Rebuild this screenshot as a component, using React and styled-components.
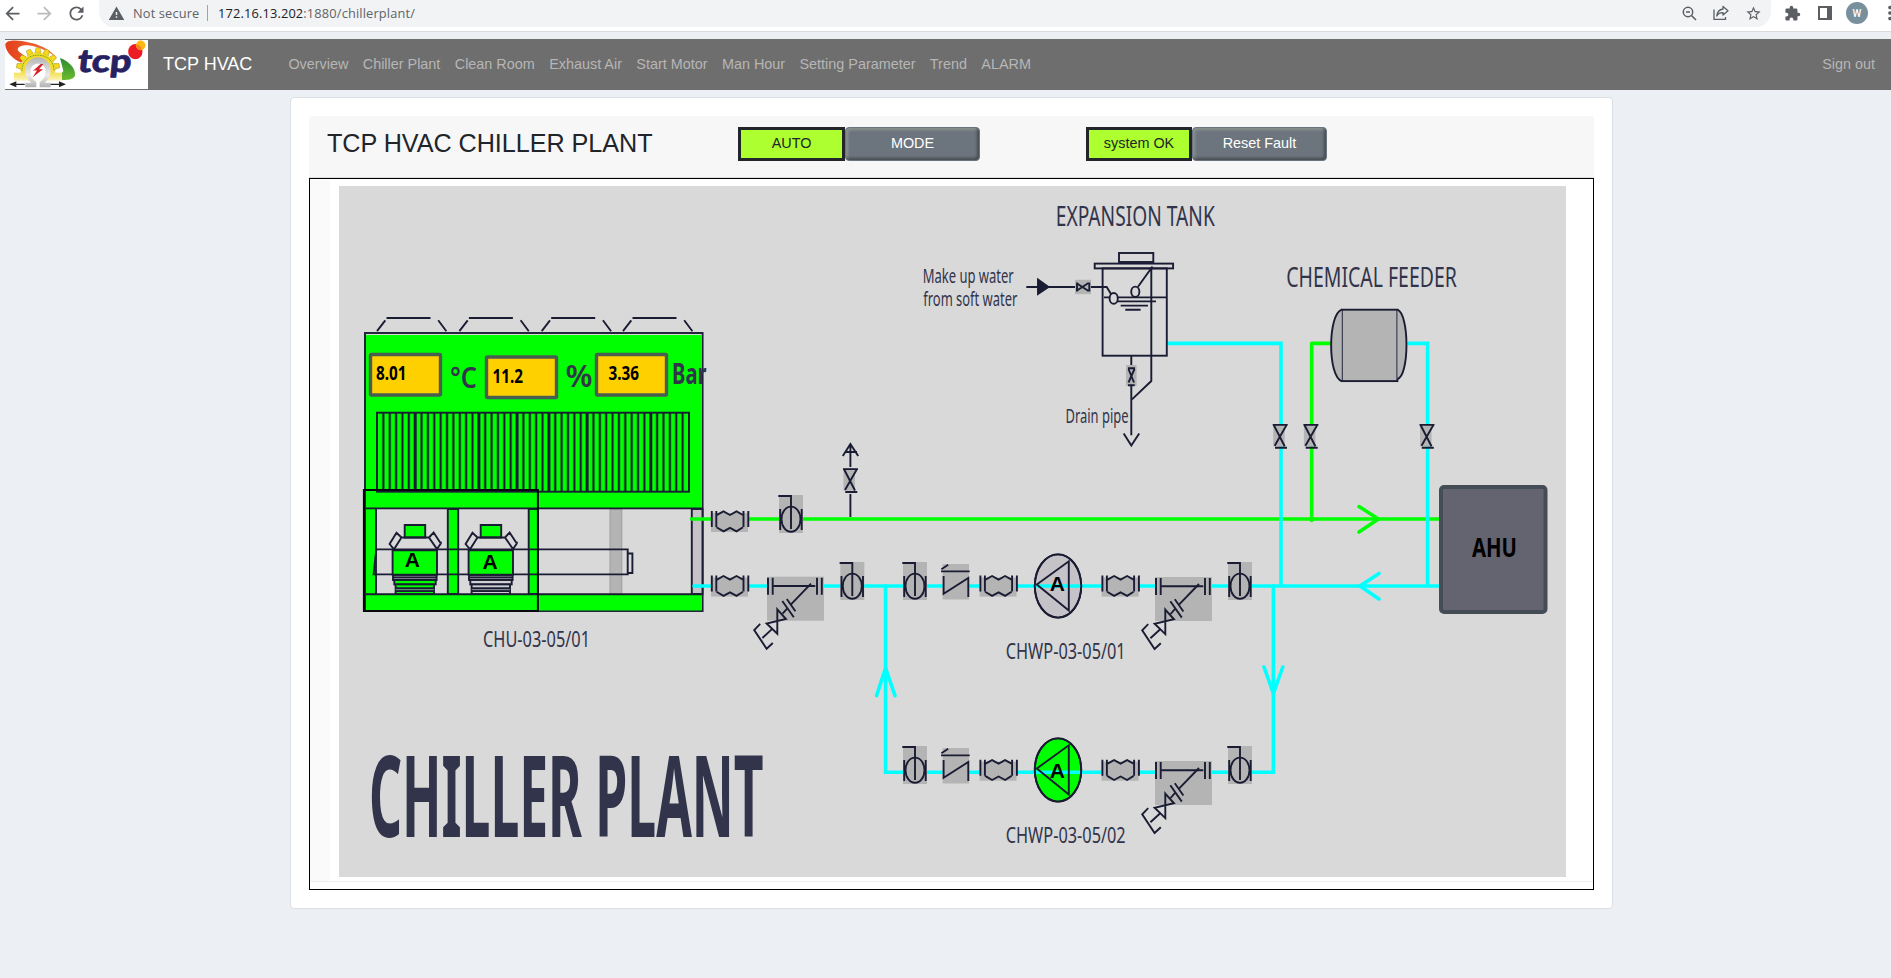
import React from 'react';
import styled, { createGlobalStyle } from 'styled-components';
import {
  MdArrowBack,
  MdArrowForward,
  MdRefresh,
  MdWarning,
  MdStarBorder,
  MdExtension,
  MdMoreVert,
} from 'react-icons/md';

const INK = '#1a1c33';
const LABEL = '#31344b';
const GREEN = '#00ff00';
const CYAN = '#00ffff';
const GRAY = '#b4b4b4';
const LILAC = '#c5c2c8';

const GlobalStyle = createGlobalStyle`
  * { box-sizing: border-box; }
  html, body { margin: 0; padding: 0; overflow: hidden; }
  body {
    background: #ecf0f4;
    font-family: "Liberation Sans", Arial, sans-serif;
    font-size: 14.4px;
    color: #212529;
  }
  svg { display: block; }
`;

const Page = styled.div`
  height: 978px;
  overflow: hidden;
  display: flex;
  flex-direction: column;
`;

/* ---- Browser toolbar ---- */

const BrowserBar = styled.div`
  height: 32px;
  flex: none;
  display: flex;
  align-items: flex-start;
  overflow: hidden;
  background: #fff;
  border-bottom: 1px solid #d8dadd;
`;

const BrowserNav = styled.div`
  width: 99px;
  height: 26px;
  flex: none;
  display: flex;
  align-items: center;
  gap: 11px;
  padding-left: 2px;
`;

const BrowserIcon = styled.span`
  display: flex;
  flex: none;
  font-size: ${(p) => p.$size || 21}px;
  color: ${(p) => (p.$dim ? '#b9bbbe' : '#5b5e63')};
`;

const AddressBar = styled.div`
  flex: 1;
  height: 27px;
  display: flex;
  align-items: center;
  padding: 0 9px 1px 9px;
  background: #f1f3f4;
  border-radius: 0 0 14px 14px / 0 0 16px 16px;
  font-family: "Open Sans", "Noto Sans", sans-serif;
  font-size: 12.8px;
  line-height: 16px;
`;

const Security = styled.span`
  width: 67px;
  margin-left: 8px;
  white-space: nowrap;
  letter-spacing: 0.15px;
  color: #5f6368;
`;

const Separator = styled.span`
  width: 1px;
  height: 16px;
  margin: 0 10px 0 7px;
  background: #9fa2a6;
`;

const Url = styled.span`
  flex: 1;
  white-space: nowrap;
  letter-spacing: 0.16px;
  color: #5f6368;
  b { font-weight: 400; color: #202124; }
`;

const AddressActions = styled.div`
  display: flex;
  align-items: center;
  gap: 16px;
`;

const BrowserTools = styled.div`
  width: 120px;
  height: 26px;
  flex: none;
  display: flex;
  align-items: center;
  padding-left: 13px;
`;

const PanelIcon = styled.svg`
  flex: none;
  margin-left: 17px;
`;

const Avatar = styled.span`
  width: 22px;
  height: 22px;
  margin: 0 11px 0 14px;
  flex: none;
  display: flex;
  align-items: center;
  justify-content: center;
  border-radius: 50%;
  background: #78909c;
  color: #fff;
  font: 500 10px Roboto, sans-serif;
`;

/* ---- Site navigation ---- */

const Navbar = styled.nav`
  height: 51px;
  flex: none;
  margin: 7px 0 0 5px;
  display: flex;
  align-items: center;
  background: #6e6e6e;
  color: #b6b6b6;
`;

const LogoBox = styled.div`
  width: 143px;
  height: 49px;
  flex: none;
  background: #fff;
`;

const Brand = styled.span`
  width: 140.4px;
  flex: none;
  padding: 0 0 1px 15px;
  font-size: 18px;
  color: #fff;
  white-space: nowrap;
`;

const NavLinks = styled.div`
  flex: 1;
  display: flex;
  gap: 14.4px;
`;

const NavLink = styled.span`
  padding-bottom: 2px;
  font-size: 14.4px;
  line-height: 20px;
  white-space: nowrap;
  margin-right: ${(p) => (p.$last ? 16 : 0)}px;
`;

/* ---- Card ---- */

const Card = styled.section`
  width: 1323px;
  height: 812px;
  flex: none;
  margin: 7px 0 0 290px;
  padding: 18px;
  background: #fff;
  border: 1px solid #dcdfe1;
  border-radius: 4px;
`;

const CardHeader = styled.header`
  height: 62px;
  display: flex;
  align-items: flex-start;
  padding: 11px 18px 0;
  background: #f7f7f7;
  border-bottom: 1px solid #dfdfdf;
  border-radius: 3px 3px 0 0;
`;

const Title = styled.h1`
  width: 411px;
  margin: 1px 0 0;
  font-size: 25.2px;
  line-height: 30px;
  font-weight: 400;
  letter-spacing: -0.05px;
  white-space: nowrap;
`;

const ControlGroup = styled.div`
  display: flex;
  width: 348px;
`;

const Status = styled.div`
  width: ${(p) => p.$width}px;
  height: 34px;
  display: flex;
  align-items: center;
  justify-content: center;
  padding-bottom: 2px;
  border: 3px solid #222529;
  background: #adff2f;
`;

const ActionButton = styled.button`
  width: ${(p) => p.$width}px;
  height: 34px;
  padding: 0 0 2px;
  border: 1px solid #6c757d;
  border-radius: 4px;
  background: #6c757d;
  box-shadow: inset -2px -2px 3px rgba(50, 56, 60, 0.65), inset 2px 2px 3px rgba(160, 168, 160, 0.6);
  color: #fff;
  font: 14.4px "Liberation Sans", Arial, sans-serif;
`;

const Frame = styled.div`
  height: 712px;
  display: flex;
  flex-direction: column;
  border: 1px solid #000;
`;

const FrameBody = styled.div`
  height: 703px;
  display: flex;
  padding-top: 1px;
  border-bottom: 1px solid #eee;
`;

const Gutter = styled.div`
  width: 20px;
  height: 701px;
  margin-right: 9px;
  background: #fafafa;
`;

const Plant = styled.div`
  width: 1227px;
  height: 691px;
  margin-top: 6px;
  background: #d9d9d9;
`;

const Label = styled.text`
  font-family: "Noto Sans", "Open Sans", sans-serif;
  font-size: ${(p) => p.$size}px;
  font-weight: ${(p) => p.$weight || 400};
  fill: ${(p) => p.$color || LABEL};
`;

const ModeLetter = styled.text`
  font-family: "Liberation Sans", Arial, sans-serif;
  font-size: 21px;
  font-weight: 700;
  fill: #000;
`;

/* Tall, narrow lettering: set at size / tall, then stretched upwards by tall. */
function Caption({ x, y, w, size, tall = 1.28, weight, color, children }) {
  return (
    <Label
      transform={`translate(${x} ${y}) scale(1 ${tall})`}
      textLength={w}
      lengthAdjust="spacingAndGlyphs"
      $size={size / tall}
      $weight={weight}
      $color={color}
    >
      {children}
    </Label>
  );
}

const ink = { stroke: INK, strokeWidth: 1.9, fill: 'none' };

function FlexJoint({ x, y }) {
  return (
    <g transform={`translate(${x} ${y})`} {...ink}>
      <rect x="0" y="2" width="37" height="19" fill={GRAY} stroke="none" />
      <path d="M.8 0V16M5.3 0V16M32.5 0V16M37.3 0V16" />
      <path d="M5.5 4.2L12.5.4L19 4L25.5.4L32 4M5.5 16.2L12.5 20.3L19 16.8L25.5 20.3L32 16.2" />
    </g>
  );
}

function ButterflyValve({ x, y }) {
  return (
    <g transform={`translate(${x} ${y})`} {...ink}>
      <rect width="24" height="38" fill={GRAY} stroke="none" />
      <path d="M-.7 1H12V34M1.2 14V35M22.7 14V35" />
      <ellipse cx="12" cy="24.2" rx="9.5" ry="12.6" />
    </g>
  );
}

function CheckValve({ x, y }) {
  return (
    <g transform={`translate(${x} ${y})`} {...ink}>
      <rect width="26.3" height="35.5" fill={GRAY} stroke="none" />
      <path d="M-1.7 7.4H27M-1.3 5.2L5.5.8M.9 12V29.8L25.6 14V33" />
    </g>
  );
}

function Strainer({ x, y }) {
  return (
    <g transform={`translate(${x} ${y})`} {...ink}>
      <rect width="57" height="44" fill={GRAY} stroke="none" />
      <path d="M1 1V18M5.7 1V18M50 1V18M54.8 1V18M6.7 9.3H48.3" />
      <path d="M44 7L24 27.6M15.3 24.3L26.8 40.6M19.8 22.3L28.4 34.5M20.3 31.6L15.6 37" />
      <path d="M10.3 32.6L19 42.3L-.4 46.8L10.3 57.1ZM4.7 52.7L-4.6 61.3M-6.8 47.2L-12.8 53.3L-.4 72L5.8 66.3" />
    </g>
  );
}

function GateValve({ x, y }) {
  return (
    <g transform={`translate(${x} ${y})`} {...ink}>
      <rect x=".5" y="0" width="11.5" height="22.5" fill={GRAY} stroke="none" />
      <path d="M0 .9H15M1.3 1.5L12 22.3M13.6 1.5L2 21.8M2.3 23.8H14.3" />
    </g>
  );
}

function Pump({ y, pipeY, fill, letterY }) {
  return (
    <g {...ink}>
      <ellipse cx="1058" cy={y} rx="23.2" ry="31.6" fill={fill} />
      <path d={`M1034 ${pipeY}H1082`} stroke={CYAN} strokeWidth="3.4" />
      <ellipse cx="1058" cy={y} rx="23.2" ry="31.6" />
      <path d={`M1036.8 ${y - 1.5}L1068.8 ${y - 24.7}V${y + 24.5}Z`} />
      <ModeLetter x="1049.8" y={letterY} stroke="none">A</ModeLetter>
    </g>
  );
}

function Compressor({ x, running }) {
  const trim = running ? GREEN : '#d0d0d3';
  return (
    <g transform={`translate(${x} 0)`} {...ink}>
      <path d="M404.7 537.5V525H425.2V537.5Z" fill={GREEN} />
      <path d="M401.5 537.5L396.5 532.8L389.6 544L394 549.3ZM429 537.5L433.6 532.5L440.8 543.6L437 549ZM401.5 537.5H429.3M439.5 542.5L441.8 542.8" fill="#d9d9d9" />
      <rect x="392.6" y="550.3" width="44.4" height="24.4" fill={GREEN} />
      <rect x="393" y="575" width="43.6" height="5" fill="#777986" />
      <path d="M393 577.4H436.6" strokeWidth="1.2" />
      <rect x="394.3" y="580" width="41.4" height="4.4" fill={trim} />
      <rect x="395.6" y="584.4" width="38.4" height="9.6" fill={trim} />
      <path d="M395.6 588.3H434M395.6 591H434" />
      <path d="M395.6 589.7H434" stroke="#777986" strokeWidth="1" />
    </g>
  );
}

function Reading({ x, y, textX, textY, value }) {
  return (
    <g>
      <rect x={x + 1.5} y={y + 1.5} width="70" height="40.5" fill="#ffd000" stroke="#485e4e" strokeWidth="3.4" rx="1" />
      <Caption x={textX} y={textY} w={30.5} size={18.8} weight={700} color="#000">{value}</Caption>
    </g>
  );
}

const SLATS = Array.from({ length: 48 }, (_, i) => i + 1);
const WIDE_SLATS = [6, 16, 22, 27, 33, 43];
const FANS = [0, 82.4, 164.7, 246];

function Chiller() {
  return (
    <g {...ink}>
      {FANS.map((dx) => (
        <path key={dx} transform={`translate(${dx} 0)`} d="M386.5 318H430.5M377 331.2L385.3 320.3M438.2 320.3L446.4 331.2" />
      ))}
      <rect x="365" y="333" width="337.6" height="278" />
      <rect x="366" y="335" width="335.8" height="173.5" fill={GREEN} stroke="none" />
      <rect x="366" y="595" width="335.8" height="15.5" fill={GREEN} stroke="none" />
      <rect x="366" y="509" width="9.8" height="85" fill={GREEN} stroke="none" />
      <rect x="610" y="509" width="11.8" height="85" fill={GRAY} stroke="#9d9da0" strokeWidth="1" />
      <rect x="691.8" y="509" width="10.7" height="85" fill={LILAC} />
      <rect x="447.8" y="509" width="10.4" height="85" fill={GREEN} />
      <rect x="528.7" y="509" width="9.3" height="85" fill={GREEN} />
      <path d="M376 508V594" />
      <rect x="377" y="412.7" width="312" height="79" />
      {SLATS.map((i) => (
        <g key={i}>
          <path d={`M${377 + i * 6.367} 413V491`} strokeOpacity=".35" strokeWidth="3.2" />
          <path d={`M${377 + i * 6.367} 413V491`} strokeWidth={WIDE_SLATS.includes(i) ? 2.8 : 1.6} />
        </g>
      ))}
      <path d="M365 508.4H702.6M365 594.2H702.6" />
      <path d="M376.3 549.4H627.7V574.4H373.6ZM627.7 553.5H632.4V573H627.7" />
      <Compressor x={0} running />
      <Compressor x={76} />
      <rect x="363.9" y="490" width="174" height="121" stroke="#05070a" strokeWidth="2" />
      <ModeLetter x="404.8" y="567.3" stroke="none">A</ModeLetter>
      <ModeLetter x="482.6" y="568.7" stroke="none">A</ModeLetter>
    </g>
  );
}

function ExpansionTank() {
  return (
    <g {...ink}>
      <rect x="1119" y="253" width="34.3" height="9" />
      <rect x="1094.7" y="263.6" width="78.4" height="4.8" />
      <rect x="1102.6" y="268.4" width="64.2" height="87.3" />
      <path d="M1104 297.4H1166M1115 301.4H1156M1120.7 305.6H1148M1125.3 309.8H1140.6" />
      <ellipse cx="1113.7" cy="298.4" rx="4.1" ry="5.4" fill="#d9d9d9" />
      <ellipse cx="1135.3" cy="291.8" rx="4.1" ry="5.2" fill="#d9d9d9" />
      <path d="M1152.5 266.5L1138 286.8M1151.3 267V381L1132 399.4" />
      <path d="M1026.3 287H1038M1048 287H1075.3M1091 287H1106.7L1111.3 294.5" />
      <path d="M1038 279.6L1048.4 287L1038 294Z" fill={INK} />
      <rect x="1075" y="279.8" width="16" height="14.3" fill={GRAY} stroke="none" />
      <path d="M1077 282.5V291.5M1077 283.5L1088.5 291M1077 290.5L1088.5 283M1089.3 282.5V291.5" />
      <path d="M1131.3 356V365M1131.3 385V435.3M1123.7 433.4L1131.3 445.5L1139.2 433.4" />
      <rect x="1126" y="365" width="10.6" height="21" fill={GRAY} stroke="none" />
      <path d="M1128 368.3H1135M1128.5 369L1134 382.5M1134.5 369L1128.5 382.5M1128 385.2H1134.7" />
    </g>
  );
}

function Diagram() {
  return (
    <svg width="1227" height="691" viewBox="339 186 1227 691">
      <Chiller />

      <g fill="none" strokeWidth="3.6" strokeLinecap="round" strokeLinejoin="round">
        <g stroke={GREEN}>
          <path d="M691.5 519H1439M1331 343.4H1311.7V520.5" />
          <path d="M1359 506.6L1378.5 519L1359 532" />
        </g>
        <g stroke={CYAN}>
          <path d="M694 586H1439M1169 343.4H1281V586M1409 343.4H1427.6V586" strokeLinejoin="miter" />
          <path d="M885.6 586V772.2H1273.4V586" strokeLinejoin="miter" />
          <path d="M1379 573.4L1360 586L1379 599M876.6 695.6L885.6 668L895 695.6M1264 667L1273.4 693.5L1282.8 667" />
        </g>
      </g>

      <ExpansionTank />

      <g {...ink}>
        <rect x="1341.8" y="309.7" width="55.6" height="71.4" fill={GRAY} />
        <path d="M1341.8 309.7C1327.6 314 1327.6 377 1341.8 381.1" fill={GRAY} />
        <path d="M1397.4 309.7C1409.5 314 1409.5 376 1397.4 379" fill={GRAY} />
        <path d="M850.4 494V517M850.4 444V467M842.8 456L850.4 444L858.2 456M845.5 452H857" />
      </g>

      <GateValve x={1272.7} y={424} />
      <GateValve x={1303.4} y={424} />
      <GateValve x={1419.5} y={424} />
      <GateValve x={843} y={468.2} />

      <FlexJoint x={711} y={511} />
      <FlexJoint x={711} y={575.6} />
      <FlexJoint x={979.6} y={575.6} />
      <FlexJoint x={1101.6} y={575.6} />
      <FlexJoint x={979.6} y={759.7} />
      <FlexJoint x={1101.6} y={759.7} />

      <ButterflyValve x={779} y={495} />
      <ButterflyValve x={840.3} y={562} />
      <ButterflyValve x={903} y={562} />
      <ButterflyValve x={1228} y={562} />
      <ButterflyValve x={903} y={746} />
      <ButterflyValve x={1228} y={746} />

      <CheckValve x={942.7} y={564} />
      <CheckValve x={942.7} y={748} />

      <Strainer x={767} y={576.7} />
      <Strainer x={1155} y={577} />
      <Strainer x={1155} y={761} />

      <Pump y={586} pipeY={586} fill={LILAC} letterY={591} />
      <Pump y={770} pipeY={772.2} fill={GREEN} letterY={778} />

      <rect x="1441" y="487" width="104.5" height="125" rx="3" fill="#636470" stroke="#444c55" strokeWidth="4" />
      <Caption x={1472} y={557} w={45} size={27} weight={700} color="#000">AHU</Caption>

      <Reading x={369} y={353} textX={376} textY={379.8} value="8.01" />
      <Reading x={485} y={355.5} textX={492.5} textY={382.8} value="11.2" />
      <Reading x={595} y={353} textX={608.4} textY={379.8} value="3.36" />
      <Caption x={450} y={387.8} w={27} size={29.5} weight={600}>°C</Caption>
      <Caption x={565.5} y={387} w={27} size={31} weight={600}>%</Caption>
      <Caption x={672} y={383.5} w={34.5} size={28} weight={700}>Bar</Caption>

      <Caption x={1055.8} y={225.8} w={159} size={26.6}>EXPANSION TANK</Caption>
      <Caption x={1286.3} y={286.8} w={170.5} size={26.6}>CHEMICAL FEEDER</Caption>
      <Caption x={922.7} y={283.4} w={91} size={19.6} tall={1.6}>Make up water</Caption>
      <Caption x={923.3} y={306.2} w={94} size={19.6} tall={1.6}>from soft water</Caption>
      <Caption x={1065.5} y={423.4} w={63} size={19.6} tall={1.32}>Drain pipe</Caption>
      <Caption x={483} y={646.8} w={107} size={22.6}>CHU-03-05/01</Caption>
      <Caption x={1005.7} y={658.8} w={120} size={22.6}>CHWP-03-05/01</Caption>
      <Caption x={1005.7} y={842.8} w={120} size={22.6}>CHWP-03-05/02</Caption>
      <Caption x={369} y={836.7} w={394.5} size={113} tall={2.18} weight={700}>CHILLER PLANT</Caption>
    </svg>
  );
}

const LogoText = styled.text`
  font-family: Lato, "Open Sans", sans-serif;
  font-size: 96px;
  font-weight: 900;
  fill: #262261;
  stroke: #262261;
  stroke-width: 2;
  stroke-linejoin: round;
`;

const TEETH = [-80, -53, -27, 0, 27, 53, 80];

function Logo() {
  return (
    <svg width="143" height="49" viewBox="15 30 429 147">
      <defs>
        <linearGradient id="orange" x1="0" y1="0" x2="1" y2="0">
          <stop offset="0" stopColor="#e2401b" />
          <stop offset="1" stopColor="#f4743b" />
        </linearGradient>
        <linearGradient id="leaf" x1="0" y1="0" x2="0" y2="1">
          <stop offset="0" stopColor="#2a8a35" />
          <stop offset="1" stopColor="#6dbb2c" />
        </linearGradient>
        <linearGradient id="steel" x1="0" y1="0" x2="0" y2="1">
          <stop offset="0" stopColor="#b4b4b4" />
          <stop offset=".6" stopColor="#ededed" />
          <stop offset="1" stopColor="#b0b0b0" />
        </linearGradient>
        <linearGradient id="gold" x1="0" y1="0" x2="0" y2="1">
          <stop offset="0" stopColor="#f7d917" />
          <stop offset=".65" stopColor="#f3dc3c" />
          <stop offset="1" stopColor="#fbf3c4" />
        </linearGradient>
      </defs>
      <path d="M64 98C38 88 14 62 16 42C22 26 62 30 98 40C128 48 152 62 168 82C142 60 100 44 76 46C54 48 48 58 58 66L74 78Z" fill="url(#orange)" />
      <path d="M180 84C206 92 228 116 225 136C220 158 166 152 128 132C160 138 188 134 190 122Z" fill="url(#leaf)" />
      <g fill="#f7d917" stroke="#8d7d1c" strokeWidth="1.2">
        {TEETH.map((a) => (
          <path key={a} transform={`rotate(${a} 114 118)`} d="M105 68L108 53H120L123 68Z" />
        ))}
      </g>
      <path d="M42 152V128H62C58 48 170 48 166 128H186V152Z" fill="url(#gold)" />
      <path d="M66 122C66 60 162 60 162 122" fill="none" stroke="#5f9e2c" strokeWidth="3" strokeDasharray="3 2" />
      <ellipse cx="114" cy="122" rx="28" ry="30" fill="#fff" />
      <path d="M76 172V158H94C82 148 76 136 76 122C76 68 152 68 152 122C152 136 146 148 134 158H152V172H119V156C134 148 136 134 136 122C136 94 92 94 92 122C92 134 94 148 109 156V172Z" fill="url(#steel)" />
      <path d="M122 102L99 122L111 121L98 142L129 118L117 118L130 102Z" fill="#d91f26" />
      <path d="M28 163L49 154V161H74V165H49V172ZM198 163L177 154V161H152V165H177V172Z" fill="#222" />
      <ellipse cx="406" cy="65" rx="21.5" ry="23" fill="#ed1c24" />
      <ellipse cx="422" cy="46" rx="14.5" ry="14.5" fill="#fdb913" />
      <path d="M409 43A14.5 14.5 0 0 0 426 60A21.5 23 0 0 0 409 43Z" fill="#f58220" />
      <LogoText transform="translate(230 127) skewX(-6)" textLength="162" lengthAdjust="spacingAndGlyphs">tcp</LogoText>
    </svg>
  );
}

const LINKS = ['Overview', 'Chiller Plant', 'Clean Room', 'Exhaust Air', 'Start Motor', 'Man Hour', 'Setting Parameter', 'Trend', 'ALARM'];

export default function App() {
  return (
    <Page>
      <GlobalStyle />
      <BrowserBar>
        <BrowserNav>
          <BrowserIcon><MdArrowBack /></BrowserIcon>
          <BrowserIcon $dim><MdArrowForward /></BrowserIcon>
          <BrowserIcon><MdRefresh /></BrowserIcon>
        </BrowserNav>
        <AddressBar>
          <BrowserIcon $size={17}><MdWarning /></BrowserIcon>
          <Security>Not secure</Security>
          <Separator />
          <Url><b>172.16.13.202</b>:1880/chillerplant/</Url>
          <AddressActions>
            <svg width="15" height="15" viewBox="0 0 15 15" fill="none" stroke="#5b5e63" strokeWidth="1.5">
              <circle cx="6" cy="6" r="4.7" />
              <path d="M9.5 9.5L14 14M4 6H8" />
            </svg>
            <svg width="16" height="16" viewBox="0 0 16 16" fill="none" stroke="#5b5e63" strokeWidth="1.3">
              <path d="M1 4.5V14.3H12.5V12" />
              <path d="M10 1.5L15 5.8L10 10V7.6C7 7.5 5 8.6 3.8 11C4.2 7 6.3 4.5 10 4Z" strokeLinejoin="round" />
            </svg>
            <BrowserIcon $size={17}><MdStarBorder /></BrowserIcon>
          </AddressActions>
        </AddressBar>
        <BrowserTools>
          <BrowserIcon $size={17}><MdExtension /></BrowserIcon>
          <PanelIcon width="14" height="14" viewBox="0 0 14 14">
            <path d="M0 0H14V14H0ZM2 2V12H9V2Z" fill="#5b5e63" fillRule="evenodd" />
          </PanelIcon>
          <Avatar>W</Avatar>
          <BrowserIcon $size={22}><MdMoreVert /></BrowserIcon>
        </BrowserTools>
      </BrowserBar>

      <Navbar>
        <LogoBox><Logo /></LogoBox>
        <Brand>TCP HVAC</Brand>
        <NavLinks>
          {LINKS.map((name) => <NavLink key={name}>{name}</NavLink>)}
        </NavLinks>
        <NavLink $last>Sign out</NavLink>
      </Navbar>

      <Card>
        <CardHeader>
          <Title>TCP HVAC CHILLER PLANT</Title>
          <ControlGroup>
            <Status $width={107}>AUTO</Status>
            <ActionButton $width={135}>MODE</ActionButton>
          </ControlGroup>
          <ControlGroup>
            <Status $width={106}>system OK</Status>
            <ActionButton $width={135}>Reset Fault</ActionButton>
          </ControlGroup>
        </CardHeader>
        <Frame>
          <FrameBody>
            <Gutter />
            <Plant><Diagram /></Plant>
          </FrameBody>
        </Frame>
      </Card>
    </Page>
  );
}
